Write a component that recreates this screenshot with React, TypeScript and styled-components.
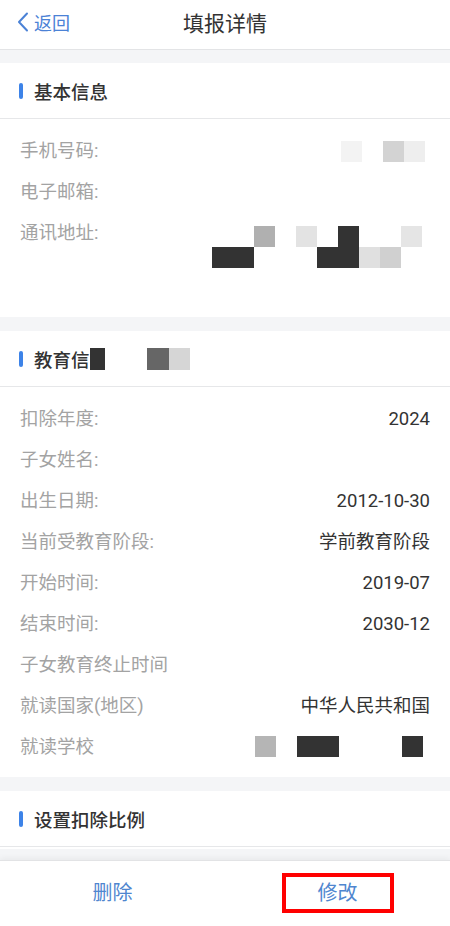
import styled, { createGlobalStyle } from 'styled-components';

const GlobalStyle = createGlobalStyle`
  html, body {
    margin: 0;
    padding: 0;
    background: #f4f5f7;
  }
  body {
    font-family: Roboto, "Noto Sans CJK SC", sans-serif;
  }
`;

const Page = styled.div`
  width: 450px;
  height: 926px;
  display: flex;
  flex-direction: column;
  background: #f4f5f7;
  overflow: hidden;
`;

const Header = styled.div`
  height: 49px;
  flex-shrink: 0;
  background: #fff;
  border-bottom: 1px solid #e3e4e6;
  display: grid;
  grid-template-columns: 90px 1fr 90px;
  align-items: center;
`;

const Back = styled.div`
  display: flex;
  align-items: center;
  gap: 5px;
  padding-left: 17px;
  margin-top: -5px;
  color: #4b82d6;
  font-size: 18px;
`;

const Title = styled.div`
  text-align: center;
  font-size: 21px;
  color: #333;
  margin-top: -5px;
`;

const Content = styled.div`
  flex: 1;
  overflow: hidden;
  display: flex;
  flex-direction: column;
  gap: 14px;
  padding-top: 13px;
`;

const Section = styled.section<{ $pad?: number }>`
  background: #fff;
  padding-bottom: ${(p) => p.$pad ?? 9}px;
`;

const SectionHead = styled.div`
  height: 55px;
  display: flex;
  align-items: center;
  gap: 11px;
  padding-left: 19px;
  border-bottom: 1px solid #e6e7e9;
  font-size: 18.5px;
  font-weight: 500;
  color: #333;
`;

const Bar = styled.span`
  width: 4px;
  height: 16px;
  border-radius: 2px;
  background: #3d83e8;
`;

const HeadText = styled.span`
  display: flex;
  align-items: center;
`;

const Rows = styled.div`
  padding-top: 12px;
`;

const Row = styled.div<{ $tall?: number }>`
  display: flex;
  justify-content: space-between;
  align-items: flex-start;
  padding: 0 20px;
  min-height: ${(p) => p.$tall ?? 41}px;
  line-height: 41px;
  font-size: 18.5px;
`;

const Label = styled.span`
  color: #a3a3a3;
  white-space: nowrap;
`;

const Value = styled.span`
  color: #333;
  white-space: nowrap;
`;

const Mosaic = styled.div<{ $top: number; $right?: number }>`
  display: flex;
  flex-direction: column;
  margin-top: ${(p) => p.$top}px;
  margin-right: ${(p) => p.$right ?? 5}px;
`;

const MosaicRow = styled.div`
  display: flex;
`;

const Cell = styled.span<{ $c: string; $w: number; $h?: number }>`
  width: ${(p) => p.$w}px;
  height: ${(p) => p.$h ?? 21}px;
  background: ${(p) => p.$c};
`;

const Footer = styled.div`
  height: 65px;
  flex-shrink: 0;
  background: #fff;
  border-top: 1px solid #e2e3e5;
  box-shadow: 0 -2px 6px rgba(0, 0, 0, 0.05);
  display: grid;
  grid-template-columns: 1fr 1fr;
  align-items: center;
  justify-items: center;
`;

const FootButton = styled.div<{ $marked?: boolean }>`
  color: #4f86cf;
  font-size: 20px;
  line-height: 32px;
  padding: 0 ${(p) => (p.$marked ? 32 : 0)}px;
  border: ${(p) => (p.$marked ? '4px solid #ff0000' : 'none')};
  margin-top: -2px;
`;

type CellDef = [string, number];

const T = 'transparent';

const renderMosaic = (rows: CellDef[][], top: number, right?: number) => (
  <Mosaic $top={top} $right={right}>
    {rows.map((row, i) => (
      <MosaicRow key={i}>
        {row.map(([c, w], j) => (
          <Cell key={j} $c={c} $w={w} />
        ))}
      </MosaicRow>
    ))}
  </Mosaic>
);

const phoneCells: CellDef[][] = [[['#f3f3f3', 21], [T, 21], ['#d3d3d3', 21], ['#eeeeee', 21]]];

const addressCells: CellDef[][] = [
  [[T, 21], [T, 21], ['#b0b0b0', 21], [T, 21], ['#e3e3e3', 21], [T, 21], ['#333', 21], [T, 21], [T, 21], ['#e5e5e5', 21]],
  [['#333', 21], ['#333', 21], [T, 21], [T, 21], [T, 21], ['#333', 21], ['#333', 21], ['#e0e0e0', 21], ['#d0d0d0', 21], [T, 21]],
];

const schoolCells: CellDef[][] = [
  [['#b5b5b5', 21], [T, 21], ['#333', 21], ['#333', 21], [T, 21], [T, 21], [T, 21], ['#333', 21]],
];

const eduRows: [string, string][] = [
  ['扣除年度:', '2024'],
  ['子女姓名:', ''],
  ['出生日期:', '2012-10-30'],
  ['当前受教育阶段:', '学前教育阶段'],
  ['开始时间:', '2019-07'],
  ['结束时间:', '2030-12'],
  ['子女教育终止时间', ''],
  ['就读国家(地区)', '中华人民共和国'],
];

const App = () => {
  return (
    <Page>
      <GlobalStyle />
      <Header>
        <Back>
          <svg width="12" height="20" viewBox="0 0 12 20">
            <polyline points="10,1.5 2,10 10,18.5" fill="none" stroke="#4b82d6" strokeWidth="2" strokeLinecap="round" strokeLinejoin="round" />
          </svg>
          返回
        </Back>
        <Title>填报详情</Title>
        <div />
      </Header>
      <Content>
        <Section>
          <SectionHead>
            <Bar />
            基本信息
          </SectionHead>
          <Rows>
            <Row>
              <Label>手机号码:</Label>
              {renderMosaic(phoneCells, 10)}
            </Row>
            <Row>
              <Label>电子邮箱:</Label>
            </Row>
            <Row $tall={95}>
              <Label>通讯地址:</Label>
              {renderMosaic(addressCells, 13, 8)}
            </Row>
          </Rows>
        </Section>
        <Section>
          <SectionHead>
            <Bar />
            <HeadText>
              教育信
              <Cell $c="#333" $w={15} $h={22} />
              <Cell $c={T} $w={42} $h={22} />
              <Cell $c="#666" $w={22} $h={22} />
              <Cell $c="#d6d6d6" $w={21} $h={22} />
            </HeadText>
          </SectionHead>
          <Rows>
            {eduRows.map(([label, value]) => (
              <Row key={label}>
                <Label>{label}</Label>
                <Value>{value}</Value>
              </Row>
            ))}
            <Row>
              <Label>就读学校</Label>
              {renderMosaic(schoolCells, 9, 7)}
            </Row>
          </Rows>
        </Section>
        <Section $pad={2}>
          <SectionHead>
            <Bar />
            设置扣除比例
          </SectionHead>
        </Section>
      </Content>
      <Footer>
        <FootButton>删除</FootButton>
        <FootButton $marked>修改</FootButton>
      </Footer>
    </Page>
  );
};

export default App;
